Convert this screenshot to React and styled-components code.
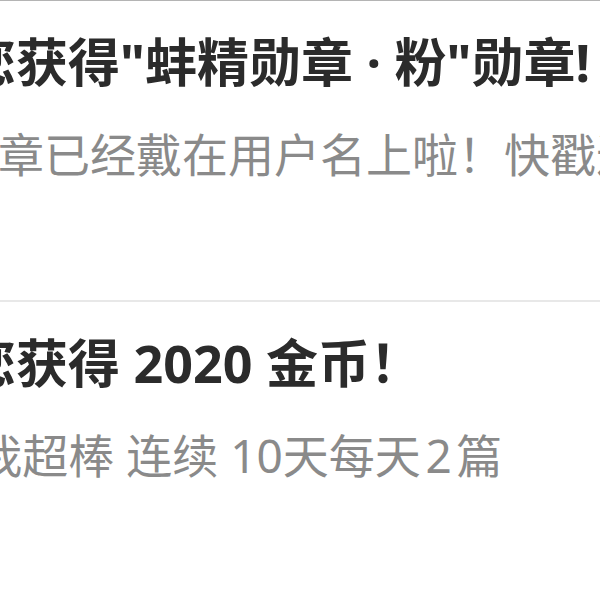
import React from 'react';
import styled, { createGlobalStyle } from 'styled-components';

const GlobalStyle = createGlobalStyle`
  html, body {
    margin: 0;
    padding: 0;
    background: #ffffff;
    overflow: hidden;
  }
  body {
    font-family: "Noto Sans", "Noto Sans CJK SC", sans-serif;
  }
`;

const Page = styled.div`
  width: 600px;
  height: 600px;
  overflow: hidden;
  border-top: 1px solid #b4b4b4;
  box-sizing: border-box;
`;

const List = styled.ul`
  list-style: none;
  margin: 0 0 0 -140px;
  padding: 0;
`;

const Item = styled.li`
  display: flex;
  flex-direction: column;
  gap: 34px;
  height: 301px;
  box-sizing: border-box;
  padding-top: 31px;
  border-bottom: 2px solid #e8e8e8;
  white-space: nowrap;
`;

const Title = styled.div`
  font-size: 52px;
  line-height: 60px;
  font-weight: 700;
  color: #2b2b2b;
`;

const Desc = styled.div`
  font-size: 46px;
  line-height: 56px;
  font-weight: 400;
  color: #8a8a8a;
`;

const notices = [
  {
    title: '恭喜您获得"蚌精勋章 · 粉"勋章!',
    desc: '您的勋章已经戴在用户名上啦！快戳进来看看吧',
  },
  {
    title: '恭喜您获得 2020 金币！',
    desc: '坚持, 我超棒 连续 10天每天\u200a2\u200a篇',
  },
];

export default function App() {
  return (
    <Page>
      <GlobalStyle />
      <List>
        {notices.map((n) => (
          <Item key={n.title}>
            <Title>{n.title}</Title>
            <Desc>{n.desc}</Desc>
          </Item>
        ))}
      </List>
    </Page>
  );
}
